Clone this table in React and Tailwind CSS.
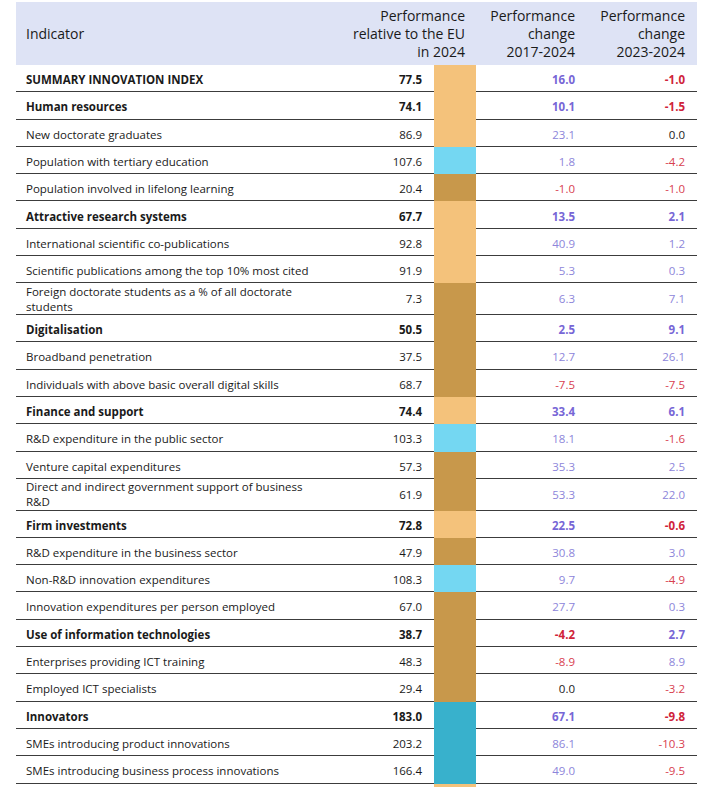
import React from "react";

const SWATCH = {
	o: "bg-[#f4c27b]",
	c: "bg-[#74d7f2]",
	b: "bg-[#c8984b]",
	t: "bg-[#38b1cc]",
};

// [label, value, swatch, change 2017-2024, change 2023-2024, bold, tall]
const rows = [
	["SUMMARY INNOVATION INDEX", "77.5", "o", "16.0", "-1.0", true],
	["Human resources", "74.1", "o", "10.1", "-1.5", true],
	["New doctorate graduates", "86.9", "o", "23.1", "0.0"],
	["Population with tertiary education", "107.6", "c", "1.8", "-4.2"],
	["Population involved in lifelong learning", "20.4", "b", "-1.0", "-1.0"],
	["Attractive research systems", "67.7", "o", "13.5", "2.1", true],
	["International scientific co-publications", "92.8", "o", "40.9", "1.2"],
	["Scientific publications among the top 10% most cited", "91.9", "o", "5.3", "0.3"],
	[["Foreign doctorate students as a % of all doctorate", "students"], "7.3", "b", "6.3", "7.1", false, true],
	["Digitalisation", "50.5", "b", "2.5", "9.1", true],
	["Broadband penetration", "37.5", "b", "12.7", "26.1"],
	["Individuals with above basic overall digital skills", "68.7", "b", "-7.5", "-7.5"],
	["Finance and support", "74.4", "o", "33.4", "6.1", true],
	["R&D expenditure in the public sector", "103.3", "c", "18.1", "-1.6"],
	["Venture capital expenditures", "57.3", "b", "35.3", "2.5"],
	[["Direct and indirect government support of business", "R&D"], "61.9", "b", "53.3", "22.0", false, true],
	["Firm investments", "72.8", "o", "22.5", "-0.6", true],
	["R&D expenditure in the business sector", "47.9", "b", "30.8", "3.0"],
	["Non-R&D innovation expenditures", "108.3", "c", "9.7", "-4.9"],
	["Innovation expenditures per person employed", "67.0", "b", "27.7", "0.3"],
	["Use of information technologies", "38.7", "b", "-4.2", "2.7", true],
	["Enterprises providing ICT training", "48.3", "b", "-8.9", "8.9"],
	["Employed ICT specialists", "29.4", "b", "0.0", "-3.2"],
	["Innovators", "183.0", "t", "67.1", "-9.8", true],
	["SMEs introducing product innovations", "203.2", "t", "86.1", "-10.3"],
	["SMEs introducing business process innovations", "166.4", "t", "49.0", "-9.5"],
];

function changeColor(v, bold) {
	const n = parseFloat(v);
	if (n === 0) return "text-[#1a1a1a]";
	if (n < 0) return bold ? "text-[#d0233a]" : "text-[#d8404f]";
	return bold ? "text-[#7766d6]" : "text-[#8d85da]";
}

const cols = "grid grid-cols-[334px_84px_42px_111px_110px]";

function Row({ label, value, swatch, c1, c2, bold, tall }) {
	const cell = `flex items-center ${tall ? "pt-0" : "pt-[3px]"} border-b border-[#3c3c3c]`;
	const weight = bold ? "font-bold" : "font-normal";
	return (
		<div className={`${cols} ${tall ? "h-[31.7px]" : "h-[27.3px]"}`}>
			<div className={`${cell} pl-[10px] ${weight} text-[#1a1a1a]`}>
				{Array.isArray(label) ? (
					<span className="leading-[15px]">
						{label[0]}
						<br />
						{label[1]}
					</span>
				) : (
					<span className="whitespace-nowrap">{label}</span>
				)}
			</div>
			<div className={`${cell} justify-end pr-[12px] ${weight} text-[#1a1a1a]`}>{value}</div>
			<div className={SWATCH[swatch]}></div>
			<div className={`${cell} justify-end pr-[12px] ${weight} ${changeColor(c1, bold)}`}>{c1}</div>
			<div className={`${cell} justify-end pr-[12px] ${weight} ${changeColor(c2, bold)}`}>{c2}</div>
		</div>
	);
}

const App = () => {
	return (
		<div className="w-[723px] h-[787px] overflow-hidden bg-white pt-[2px] pl-[16px] font-['Open_Sans',sans-serif] text-[11.5px]">
			<div className="w-[681px]">
				<div className={`${cols} h-[63px] bg-[#dee3f5] text-[14px] leading-[18px] text-[#1a1a1a]`}>
					<div className="flex items-center pl-[10px]">Indicator</div>
					<div className="col-span-2 flex items-center justify-end pr-[11px] text-right whitespace-nowrap">
						<span>
							Performance
							<br />
							relative to the EU
							<br />
							in 2024
						</span>
					</div>
					<div className="flex items-center justify-end pr-[12px] text-right">
						<span>
							Performance
							<br />
							change
							<br />
							2017-2024
						</span>
					</div>
					<div className="flex items-center justify-end pr-[12px] text-right">
						<span>
							Performance
							<br />
							change
							<br />
							2023-2024
						</span>
					</div>
				</div>

				{rows.map((r, i) => (
					<Row
						key={i}
						label={r[0]}
						value={r[1]}
						swatch={r[2]}
						c1={r[3]}
						c2={r[4]}
						bold={r[5]}
						tall={r[6]}
					/>
				))}

				<div className={`${cols} h-[10px]`}>
					<div></div>
					<div></div>
					<div className="bg-[#f4c27b]"></div>
				</div>
			</div>
		</div>
	);
};

export default App;
